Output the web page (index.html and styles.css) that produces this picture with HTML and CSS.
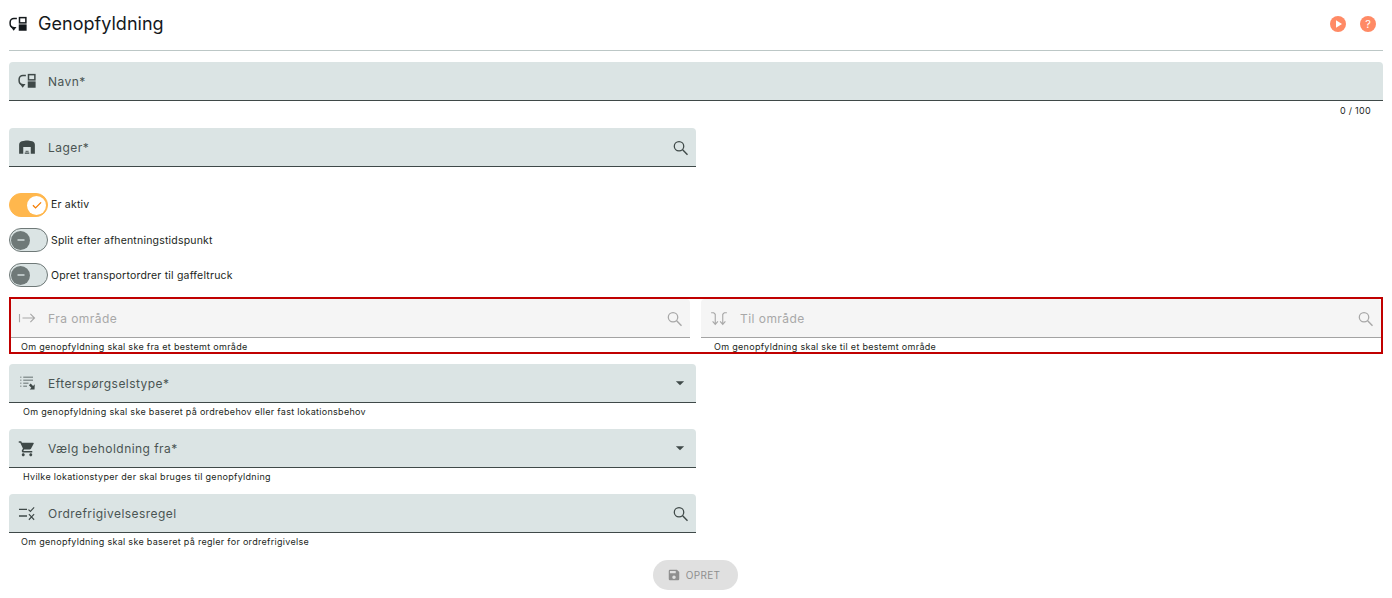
FILE: index.html
```html
<!DOCTYPE html>
<html lang="da">
<head>
<meta charset="utf-8">
<title>Genopfyldning</title>
<link rel="stylesheet" href="styles.css">
</head>
<body>
<svg class="defs" width="0" height="0" aria-hidden="true">
  <symbol id="replen" viewBox="0 0 24 24">
    <path d="M10.500 4.500H6.500A5 5 0 0 0 1.500 9.500v2a5 5 0 0 0 4.500 5" fill="none" stroke="currentColor" stroke-width="2"/>
    <path d="M2.500 16h7.500l-3.700 5z" fill="currentColor"/>
    <rect x="14" y="3.500" width="8.500" height="7" fill="none" stroke="currentColor" stroke-width="2"/>
    <rect x="13" y="12.500" width="10.500" height="8.500" fill="currentColor"/>
  </symbol>
  <symbol id="search" viewBox="0 0 24 24">
    <circle cx="10.700" cy="11" r="6.300" fill="none" stroke="currentColor" stroke-width="1.700"/>
    <path d="M15.500 15.800l6.500 6.500" fill="none" stroke="currentColor" stroke-width="1.900"/>
  </symbol>
  <symbol id="caret" viewBox="0 0 24 24"><path d="M6.500 9.500l5.500 5.500 5.500-5.500z" fill="currentColor"/></symbol>
  <symbol id="minus" viewBox="0 0 24 24"><rect x="6" y="10.800" width="12" height="2.400" fill="currentColor"/></symbol>
</svg>

<header class="topbar">
  <svg class="title-icon"><use href="#replen"/></svg>
  <h1 class="title">Genopfyldning</h1>
  <div class="top-actions">
    <span class="round-btn"><svg viewBox="0 0 24 24" width="16" height="16"><path d="M9 6.500v11l9-5.500z" fill="#fff"/></svg></span>
    <span class="round-btn round-text">?</span>
  </div>
</header>

<main class="form">
  <div class="field-wrap wrap-name">
    <div class="field">
      <svg class="f-icon"><use href="#replen"/></svg>
      <span class="f-label">Navn*</span>
    </div>
    <div class="counter">0 / 100</div>
  </div>

  <div class="half wrap-lager">
    <div class="field">
      <svg class="f-icon" viewBox="0 0 24 24"><path d="M1.500 21V9C1.500 6.500 3 5 5 4.300 8 3.300 10 3.200 12 3.200s4 .1 7 1.100C21 5 22.500 6.500 22.500 9v12H17v-9H7v9zM10.200 17h1.500v1.500h-1.500zm2.200 0h1.500v1.500h-1.500zM9 19.300h6V21H9z" fill="currentColor"/></svg>
      <span class="f-label">Lager*</span>
      <svg class="f-end"><use href="#search"/></svg>
    </div>
  </div>

  <div class="toggles">
    <label class="toggle-row">
      <span class="toggle on"><span class="knob"><svg viewBox="0 0 24 24" width="14" height="14"><path d="M5 12.500l4.500 4.500L19 7.500" fill="none" stroke="#f57c00" stroke-width="2.200"/></svg></span></span>
      <span class="toggle-label">Er aktiv</span>
    </label>
    <label class="toggle-row">
      <span class="toggle"><span class="knob"><svg width="14" height="14"><use href="#minus"/></svg></span></span>
      <span class="toggle-label">Split efter afhentningstidspunkt</span>
    </label>
    <label class="toggle-row">
      <span class="toggle"><span class="knob"><svg width="14" height="14"><use href="#minus"/></svg></span></span>
      <span class="toggle-label">Opret transportordrer til gaffeltruck</span>
    </label>
  </div>

  <section class="red-box">
    <div class="col col-from">
      <div class="field disabled">
        <svg class="f-icon" viewBox="0 0 24 24"><path d="M2 6.500v11M6 12h16M16.500 6.500L22 12l-5.500 5.500" fill="none" stroke="currentColor" stroke-width="1.500"/></svg>
        <span class="f-label">Fra område</span>
        <svg class="f-end"><use href="#search"/></svg>
      </div>
      <div class="hint">Om genopfyldning skal ske fra et bestemt område</div>
    </div>
    <div class="col col-to">
      <div class="field disabled">
        <svg class="f-icon" viewBox="0 0 24 24"><path d="M1.500 5H5l2 2V20M3.500 16.500L7 20.500l3.500-4M22.500 5H19l-2 2V20M13.500 16.500l3.500 4 3.500-4" fill="none" stroke="currentColor" stroke-width="1.500"/></svg>
        <span class="f-label">Til område</span>
        <svg class="f-end"><use href="#search"/></svg>
      </div>
      <div class="hint">Om genopfyldning skal ske til et bestemt område</div>
    </div>
  </section>

  <div class="half">
    <div class="field">
      <svg class="f-icon" viewBox="0 0 24 24"><path d="M3 3.500h1.500v1.100H3zm4 0h13v1.100H7zM3 7.500h1.500v1.100H3zm4 0h13v1.100H7zM3 11.500h1.500v1.100H3zm4 0h7v1.100H7zM3 15.500h1.500v1.100H3zm4 0h5v1.100H7z" fill="currentColor"/><path d="M15 20.500V14l2.300 2.300 3.200-3.200 2.300 2.300-3.200 3.200 2.400 2.300z" fill="currentColor" transform="rotate(-90 18.500 17)"/></svg>
      <span class="f-label">Efterspørgselstype*</span>
      <svg class="f-end"><use href="#caret"/></svg>
    </div>
    <div class="hint">Om genopfyldning skal ske baseret på ordrebehov eller fast lokationsbehov</div>
  </div>

  <div class="half">
    <div class="field">
      <svg class="f-icon" viewBox="0 -1 24 24"><path d="M7 18c-1.100 0-1.990.9-1.990 2S5.900 22 7 22s2-.9 2-2-.9-2-2-2zM1 2v2h2l3.600 7.590-1.350 2.450c-.16.280-.25.610-.25.960 0 1.100.9 2 2 2h12v-2H7.420c-.14 0-.25-.11-.25-.25l.03-.12.900-1.630h7.450c.75 0 1.410-.41 1.750-1.030l3.580-6.490A1 1 0 0 0 20 4H5.210l-.94-2H1zm16 16c-1.100 0-1.990.9-1.990 2s.89 2 1.990 2 2-.9 2-2-.9-2-2-2z" fill="currentColor"/></svg>
      <span class="f-label">Vælg beholdning fra*</span>
      <svg class="f-end"><use href="#caret"/></svg>
    </div>
    <div class="hint">Hvilke lokationstyper der skal bruges til genopfyldning</div>
  </div>

  <div class="half">
    <div class="field">
      <svg class="f-icon" viewBox="0 0 24 24"><path d="M1.300 7.300H12M1.300 16H12" fill="none" stroke="currentColor" stroke-width="1.700"/><path d="M14 7.500l2.500 2.500 5-5.500M14.500 13.500l7 7.500M21.500 13.500l-7 7.500" fill="none" stroke="currentColor" stroke-width="1.500"/></svg>
      <span class="f-label">Ordrefrigivelsesregel</span>
      <svg class="f-end"><use href="#search"/></svg>
    </div>
    <div class="hint hint-flush">Om genopfyldning skal ske baseret på regler for ordrefrigivelse</div>
  </div>

  <div class="actions">
    <button class="save" type="button" disabled>
      <svg viewBox="0 0 24 24" width="14" height="14"><path d="M17 3H5a2 2 0 0 0-2 2v14a2 2 0 0 0 2 2h14a2 2 0 0 0 2-2V7l-4-4zm-5 16a3 3 0 1 1 0-6 3 3 0 0 1 0 6zm3-10H5V5h10v4z" fill="currentColor"/></svg>
      OPRET
    </button>
  </div>
</main>
</body>
</html>
```
FILE: styles.css
```css
* { box-sizing: border-box; }
html, body { margin: 0; padding: 0; }
body {
  width: 1392px;
  height: 598px;
  overflow: hidden;
  background: #fff;
  font-family: Inter, "Liberation Sans", sans-serif;
  color: #1b1f22;
}
.defs { position: absolute; }

.topbar {
  height: 51px;
  margin: 0 9px;
  border-bottom: 1px solid #bcc7c6;
  display: flex;
  align-items: center;
  padding-bottom: 2px;
}
.title-icon { width: 18px; height: 18px; margin-right: 11px; color: #14191c; }
.title { margin: 0; font-size: 18px; font-weight: 400; line-height: 24px; letter-spacing: 0.03px; color: #14191c; }
.top-actions { margin-left: auto; display: flex; gap: 14px; padding-right: 7px; }
.round-btn {
  width: 16px;
  height: 16px;
  border-radius: 50%;
  background: #ff8a65;
  color: #fff;
  display: flex;
  align-items: center;
  justify-content: center;
}
.round-text { font-size: 11px; line-height: 16px; }

.form { padding: 11px 9px 0; }

.field {
  height: 39px;
  background: #dbe4e4;
  border-bottom: 1px solid #3f4948;
  border-radius: 4px 4px 0 0;
  display: flex;
  align-items: center;
  padding: 0 7px 0 9px;
  color: #3f4948;
}
.f-icon { width: 18px; height: 18px; flex: none; color: #3f4948; }
.f-label { margin: 2px 0 0 12px; font-size: 12px; letter-spacing: 0.45px; line-height: 18px; color: #4a5453; }
.f-end { width: 18px; height: 18px; margin-left: auto; flex: none; color: #3f4948; }

.counter {
  height: 27px;
  padding: 4px 12px 0 0;
  text-align: right;
  font-size: 9px;
  line-height: 12px;
  letter-spacing: 0.3px;
  color: #1b1f22;
}

.half { width: 687px; }
.wrap-lager { height: 39px; }

.toggles { margin-top: 26px; display: flex; flex-direction: column; gap: 11px; }
.toggle-row { display: flex; align-items: center; height: 24px; gap: 3px; }
.toggle-row + .toggle-row .toggle-label { margin-top: 2px; }
.toggle {
  width: 39px;
  height: 24px;
  border-radius: 12px;
  background: #dbe4e4;
  border: 1px solid #6f7978;
  display: flex;
  align-items: center;
  padding-left: 1px;
  flex: none;
}
.toggle .knob {
  width: 19px;
  height: 19px;
  border-radius: 50%;
  background: #6f7978;
  color: #dbe4e4;
  display: flex;
  align-items: center;
  justify-content: center;
}
.toggle.on {
  background: #ffb74d;
  border-color: #ffb74d;
  justify-content: flex-end;
  padding: 0 1px 0 0;
}
.toggle.on .knob { background: #fff; }
.toggle-label { font-size: 10.5px; line-height: 14px; letter-spacing: 0.2px; color: #1b1f22; }

.red-box {
  margin-top: 10px;
  height: 57px;
  border: 2px solid #c00000;
  display: flex;
  gap: 11px;
  overflow: hidden;
}
.col { min-width: 0; }
.col-from { flex: 0 0 679px; }
.col-to { flex: 1 1 0; }
.field.disabled { background: #f5f5f5; border-bottom-color: #a3a3a3; }
.field.disabled .f-icon,
.field.disabled .f-end { color: #a8a8a8; }
.field.disabled .f-label { color: #a8a8a8; }
.col-from .field { padding-left: 7px; padding-right: 7px; }
.col-to .f-label { margin-left: 12px; }

.hint {
  height: 26px;
  padding: 3px 0 0 14px;
  font-size: 9px;
  line-height: 12px;
  letter-spacing: 0.3px;
  color: #1b1f22;
}
.hint-flush { padding-left: 12px; }
.red-box .hint { height: 16px; padding: 3px 0 0 10px; }
.red-box .col-to .hint { padding-left: 13px; }

.red-box + .half { margin-top: 10px; }

.actions { display: flex; justify-content: center; margin-top: 1px; padding-right: 1px; }
.save {
  width: 85px;
  height: 30px;
  border: 0;
  border-radius: 15px;
  background: #e0e0e0;
  color: #8f8f8f;
  display: flex;
  align-items: center;
  justify-content: center;
  gap: 5px;
  font-family: inherit;
  font-size: 10px;
  letter-spacing: 0.3px;
  padding: 0 4px 0 0;
}
```
